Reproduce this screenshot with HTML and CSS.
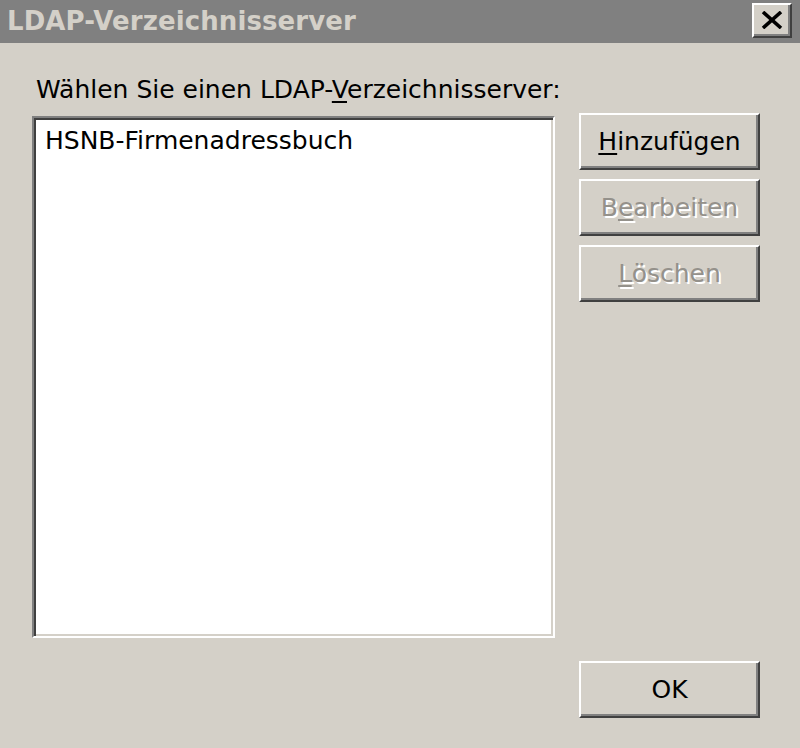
FILE: index.html
```html
<!DOCTYPE html>
<html lang="de">
<head>
<meta charset="utf-8">
<title>LDAP-Verzeichnisserver</title>
<link rel="stylesheet" href="styles.css">
</head>
<body>
<div class="dialog">
  <div class="titlebar">
    <span class="title">LDAP-Verzeichnisserver</span>
    <button class="close" aria-label="Schließen">
      <svg width="22" height="18" viewBox="0 0 22 18"><path d="M2 1 L20 17 M20 1 L2 17" stroke="#000" stroke-width="3.6" fill="none"/></svg>
    </button>
  </div>
  <div class="content">
    <div class="main">
      <div class="left">
        <div class="label">Wählen Sie einen LDAP-<u>V</u>erzeichnisserver:</div>
        <div class="listbox">
          <div class="item">HSNB-Firmenadressbuch</div>
        </div>
      </div>
      <div class="buttons">
        <button class="btn"><u>H</u>inzufügen</button>
        <button class="btn disabled">B<u>e</u>arbeiten</button>
        <button class="btn disabled"><u>L</u>öschen</button>
      </div>
    </div>
    <div class="footer">
      <button class="btn">OK</button>
    </div>
  </div>
</div>
</body>
</html>
```
FILE: styles.css
```css
html, body {
  margin: 0;
  padding: 0;
  background: #d4d0c8;
}
.dialog {
  width: 800px;
  height: 748px;
  font-family: "DejaVu Sans", sans-serif;
  font-size: 25px;
  color: #000;
}
.titlebar {
  height: 43px;
  background: #808080;
  display: flex;
  align-items: center;
  justify-content: space-between;
  box-sizing: border-box;
  padding: 0 8px 0 7px;
}
.title {
  color: #d4d0c8;
  font-weight: bold;
  font-size: 26px;
  margin-top: -1px;
  letter-spacing: 0.1px;
}
.close {
  width: 40px;
  height: 35px;
  margin-top: -3px;
  box-sizing: border-box;
  padding: 0;
  background: #d4d0c8;
  border: 2px solid;
  border-color: #fff #404040 #404040 #fff;
  box-shadow: inset -2px -2px #808080;
  display: flex;
  align-items: center;
  justify-content: center;
}
.content {
  padding: 0 40px 0 32px;
}
.main {
  display: flex;
  gap: 24px;
}
.left {
  width: 523px;
}
.label {
  margin-top: 34px;
  line-height: 26px;
  padding-left: 4px;
  margin-bottom: 13px;
  white-space: nowrap;
}
u {
  text-decoration-thickness: 2px;
  text-underline-offset: 3px;
}
.listbox {
  height: 522px;
  box-sizing: border-box;
  background: #fff;
  border: 2px solid;
  border-color: #808080 #fff #fff #808080;
  box-shadow: inset 2px 2px #404040, inset -2px -2px #d4d0c8;
  padding: 8px 11px;
}
.item {
  line-height: 30px;
}
.buttons {
  padding-top: 70px;
  display: flex;
  flex-direction: column;
  gap: 9px;
}
.btn {
  width: 181px;
  height: 57px;
  box-sizing: border-box;
  background: #d4d0c8;
  border: 2px solid;
  border-color: #fff #404040 #404040 #fff;
  box-shadow: inset -2px -2px #808080;
  font-family: inherit;
  font-size: 25px;
  color: #000;
  padding: 0;
}
.btn.disabled {
  color: #94918b;
  text-shadow: 2px 2px 0 #fff;
}
.footer {
  display: flex;
  justify-content: flex-end;
  margin-top: 23px;
}
```
